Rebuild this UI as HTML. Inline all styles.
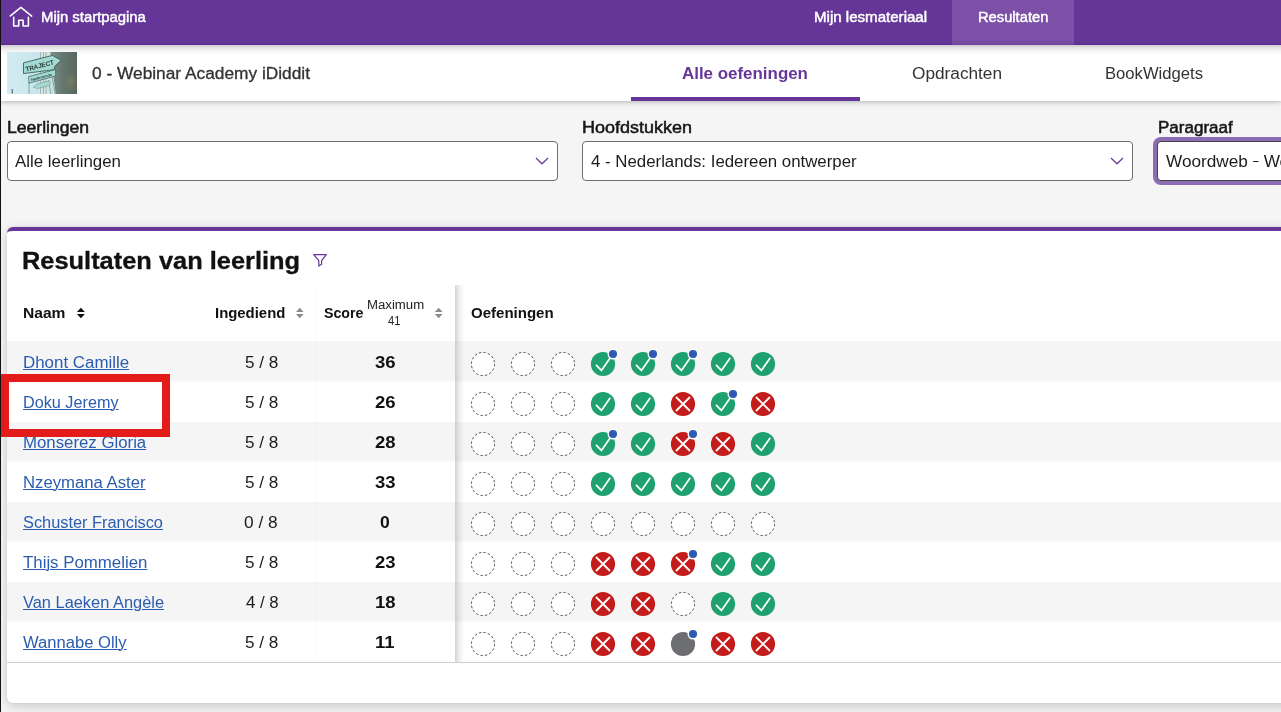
<!DOCTYPE html>
<html>
<head>
<meta charset="utf-8">
<style>
*{box-sizing:border-box;margin:0;padding:0}
html,body{width:1281px;height:712px;overflow:hidden;background:#f5f5f5;font-family:"Liberation Sans",sans-serif;color:#222}
body{position:relative}
.abs{position:absolute}
.tx{position:absolute;white-space:nowrap;transform-origin:0 0}
.edge{left:0;top:0;width:1px;height:712px;background:#111;z-index:50}
.topbar{left:0;top:0;width:1281px;height:45px;background:#653698}
.restab{left:952px;top:0;width:122px;height:45px;background:#7b50a6}
.sub{left:0;top:45px;width:1281px;height:56px;background:#fff;box-shadow:0 1px 5px rgba(0,0,0,.28)}
.thumb{left:7px;top:52px;width:70px;height:42px;overflow:hidden}
.tabline{left:631px;top:97px;width:229px;height:4px;background:#653698}
.sel{height:40px;top:141px;background:#fff;border:1px solid #6f6f6f;border-radius:4px}
.card{left:7px;top:227px;width:1290px;height:476px;background:#fff;border-top:4px solid #653698;border-radius:6px 0 0 6px;box-shadow:0 3px 12px rgba(0,0,0,.19),0 0 2px rgba(0,0,0,.08)}
.row{left:7px;width:1290px;height:40px}
.row.g{background:#f5f5f5}
svg{position:absolute;overflow:visible}
</style>
</head>
<body>
<div class="abs topbar"></div>
<div class="abs restab"></div>
<svg style="left:0;top:0" width="40" height="40" viewBox="0 0 40 40"><path d="M10.4 15.9 L20.9 7.4 L31.7 16.1 M13.7 17.3 V26 H18.7 V20.3 H23.1 V26 H28.4 V17.3" fill="none" stroke="#fff" stroke-width="1.6" stroke-linejoin="round" stroke-linecap="round"/></svg>

<div class="abs sub"></div>
<div class="abs" style="left:0;top:45px;width:1281px;height:10px;background:linear-gradient(180deg,rgba(0,0,0,.2),rgba(0,0,0,.11) 25%,rgba(0,0,0,.04) 60%,rgba(0,0,0,0))"></div>
<div class="abs" style="left:0;top:44px;width:1281px;height:1px;background:#5c2d90"></div>
<div class="abs" style="left:952px;top:44px;width:122px;height:1px;background:#7241a2"></div>
<div class="abs thumb"><svg width="70" height="42" viewBox="0 0 70 42" style="left:0;top:0">
<defs><linearGradient id="sky" x1="0" x2="1"><stop offset="0" stop-color="#d3ecf3"/><stop offset="1" stop-color="#b9dde6"/></linearGradient>
<linearGradient id="dk" x1="0" x2="1"><stop offset="0" stop-color="#7d8f86"/><stop offset=".45" stop-color="#64766d"/><stop offset="1" stop-color="#56655e"/></linearGradient>
<radialGradient id="bl" cx=".5" cy=".5" r=".5"><stop offset="0" stop-color="#8f8a55" stop-opacity=".5"/><stop offset="1" stop-color="#8f8a55" stop-opacity="0"/></radialGradient>
<filter id="bz" x="-5%" y="-5%" width="110%" height="110%"><feGaussianBlur stdDeviation=".45"/></filter></defs>
<g filter="url(#bz)">
<rect x="-2" y="-2" width="74" height="46" fill="url(#sky)"/>
<rect x="31" y="-2" width="13" height="46" fill="#cfe3e4"/>
<path d="M33.5 0 V42 M36.5 0 V42 M39 0 V42" stroke="#8fa5a0" stroke-width=".7"/>
<polygon points="43,-2 72,-2 72,44 49,44" fill="url(#dk)"/>
<ellipse cx="64" cy="30" rx="7" ry="10" fill="url(#bl)"/>
<path d="M22 30 V43 M44.5 22 L48.5 43 M41.5 28 L44 43" stroke="#7f9a92" stroke-width=".9" fill="none"/>
<polygon points="16.5,10.8 45.5,3.4 54,8.2 47.6,14.4 47.4,17.6 16.5,21.6" fill="#a3dad2" stroke="#3f5f5a" stroke-width=".9"/>
<polygon points="21.6,24.6 48.6,17.6 48.6,24 22,31.2" fill="#a3dad2" stroke="#4a6a65" stroke-width=".8"/>
<polygon points="26.3,35 30.5,31.8 43,28.8 43,33.2 30.5,36.6" fill="#a3dad2" stroke="#6a8a85" stroke-width=".5"/>
<text x="19.2" y="19.6" transform="rotate(-14.5 19.2 19.6)" font-family="Liberation Sans" font-size="6.6" font-weight="bold" fill="#2a3a38" textLength="29" lengthAdjust="spacingAndGlyphs">TRAJECT</text>
<text x="24.4" y="29.2" transform="rotate(-14.5 24.4 29.2)" font-family="Liberation Sans" font-size="3.8" font-weight="bold" fill="#2f4340" textLength="21.5" lengthAdjust="spacingAndGlyphs">Nederlands</text>
<rect x="4.7" y="37" width="1" height="4.5" fill="#3c4a50"/>
</g></svg></div>
<div class="abs tabline"></div>

<div class="abs sel" style="left:7px;width:551px"></div>
<div class="abs sel" style="left:582px;width:551px"></div>
<div class="abs" style="left:1153px;top:137px;width:160px;height:48px;background:#8e6bb5;border-radius:8px"></div>
<div class="abs sel" style="left:1157px;width:160px;border-color:#444"></div>
<svg style="left:535px;top:156.5px" width="14" height="8" viewBox="0 0 14 8"><path d="M1 1 L7 6.8 L13 1" fill="none" stroke="#6b3a9e" stroke-width="1.2"/></svg>
<svg style="left:1110px;top:156.5px" width="14" height="8" viewBox="0 0 14 8"><path d="M1 1 L7 6.8 L13 1" fill="none" stroke="#6b3a9e" stroke-width="1.2"/></svg>

<div class="abs card"></div>
<svg style="left:0;top:0" width="400" height="300" viewBox="0 0 400 300"><path d="M313.7 254.6 H326.3 L321.6 260.7 V264.2 L318.8 266 V260.7 Z" fill="none" stroke="#653698" stroke-width="1.2" stroke-linejoin="round"/></svg>

<div class="abs row g" style="top:341px;height:40px"></div>
<div class="abs" style="left:7px;top:381px;width:1290px;height:1px;background:#fafafa"></div>
<div class="abs row g" style="top:422px;height:39px"></div>
<div class="abs" style="left:7px;top:461px;width:1290px;height:1px;background:#fafafa"></div>
<div class="abs row g" style="top:502px;height:39px"></div>
<div class="abs" style="left:7px;top:541px;width:1290px;height:1px;background:#fafafa"></div>
<div class="abs row g" style="top:582px;height:39px"></div>
<div class="abs" style="left:7px;top:621px;width:1290px;height:1px;background:#fafafa"></div>
<svg style="left:0;top:0" width="1281" height="712" viewBox="0 0 1281 712"><circle cx="483" cy="364" r="11.6" fill="#fff" stroke="#555" stroke-width="1" stroke-dasharray="2.5 2.05"/><circle cx="523" cy="364" r="11.6" fill="#fff" stroke="#555" stroke-width="1" stroke-dasharray="2.5 2.05"/><circle cx="563" cy="364" r="11.6" fill="#fff" stroke="#555" stroke-width="1" stroke-dasharray="2.5 2.05"/><circle cx="603" cy="364" r="12.1" fill="#1fa16f"/><path d="M595.9 364.9 L601.4 370.4 L610.3 357.8" fill="none" stroke="#fff" stroke-width="1.7"/><circle cx="613" cy="354" r="5.5" fill="#fff"/><circle cx="613" cy="354" r="4.1" fill="#2d5bb1"/><circle cx="643" cy="364" r="12.1" fill="#1fa16f"/><path d="M635.9 364.9 L641.4 370.4 L650.3 357.8" fill="none" stroke="#fff" stroke-width="1.7"/><circle cx="653" cy="354" r="5.5" fill="#fff"/><circle cx="653" cy="354" r="4.1" fill="#2d5bb1"/><circle cx="683" cy="364" r="12.1" fill="#1fa16f"/><path d="M675.9 364.9 L681.4 370.4 L690.3 357.8" fill="none" stroke="#fff" stroke-width="1.7"/><circle cx="693" cy="354" r="5.5" fill="#fff"/><circle cx="693" cy="354" r="4.1" fill="#2d5bb1"/><circle cx="723" cy="364" r="12.1" fill="#1fa16f"/><path d="M715.9 364.9 L721.4 370.4 L730.3 357.8" fill="none" stroke="#fff" stroke-width="1.7"/><circle cx="763" cy="364" r="12.1" fill="#1fa16f"/><path d="M755.9 364.9 L761.4 370.4 L770.3 357.8" fill="none" stroke="#fff" stroke-width="1.7"/><circle cx="483" cy="404" r="11.6" fill="#fff" stroke="#555" stroke-width="1" stroke-dasharray="2.5 2.05"/><circle cx="523" cy="404" r="11.6" fill="#fff" stroke="#555" stroke-width="1" stroke-dasharray="2.5 2.05"/><circle cx="563" cy="404" r="11.6" fill="#fff" stroke="#555" stroke-width="1" stroke-dasharray="2.5 2.05"/><circle cx="603" cy="404" r="12.1" fill="#1fa16f"/><path d="M595.9 404.9 L601.4 410.4 L610.3 397.8" fill="none" stroke="#fff" stroke-width="1.7"/><circle cx="643" cy="404" r="12.1" fill="#1fa16f"/><path d="M635.9 404.9 L641.4 410.4 L650.3 397.8" fill="none" stroke="#fff" stroke-width="1.7"/><circle cx="683" cy="404" r="12.1" fill="#c41b1b"/><path d="M676 397 L690 411 M690 397 L676 411" fill="none" stroke="#fff" stroke-width="1.9"/><circle cx="723" cy="404" r="12.1" fill="#1fa16f"/><path d="M715.9 404.9 L721.4 410.4 L730.3 397.8" fill="none" stroke="#fff" stroke-width="1.7"/><circle cx="733" cy="394" r="5.5" fill="#fff"/><circle cx="733" cy="394" r="4.1" fill="#2d5bb1"/><circle cx="763" cy="404" r="12.1" fill="#c41b1b"/><path d="M756 397 L770 411 M770 397 L756 411" fill="none" stroke="#fff" stroke-width="1.9"/><circle cx="483" cy="444" r="11.6" fill="#fff" stroke="#555" stroke-width="1" stroke-dasharray="2.5 2.05"/><circle cx="523" cy="444" r="11.6" fill="#fff" stroke="#555" stroke-width="1" stroke-dasharray="2.5 2.05"/><circle cx="563" cy="444" r="11.6" fill="#fff" stroke="#555" stroke-width="1" stroke-dasharray="2.5 2.05"/><circle cx="603" cy="444" r="12.1" fill="#1fa16f"/><path d="M595.9 444.9 L601.4 450.4 L610.3 437.8" fill="none" stroke="#fff" stroke-width="1.7"/><circle cx="613" cy="434" r="5.5" fill="#fff"/><circle cx="613" cy="434" r="4.1" fill="#2d5bb1"/><circle cx="643" cy="444" r="12.1" fill="#1fa16f"/><path d="M635.9 444.9 L641.4 450.4 L650.3 437.8" fill="none" stroke="#fff" stroke-width="1.7"/><circle cx="683" cy="444" r="12.1" fill="#c41b1b"/><path d="M676 437 L690 451 M690 437 L676 451" fill="none" stroke="#fff" stroke-width="1.9"/><circle cx="693" cy="434" r="5.5" fill="#fff"/><circle cx="693" cy="434" r="4.1" fill="#2d5bb1"/><circle cx="723" cy="444" r="12.1" fill="#c41b1b"/><path d="M716 437 L730 451 M730 437 L716 451" fill="none" stroke="#fff" stroke-width="1.9"/><circle cx="763" cy="444" r="12.1" fill="#1fa16f"/><path d="M755.9 444.9 L761.4 450.4 L770.3 437.8" fill="none" stroke="#fff" stroke-width="1.7"/><circle cx="483" cy="484" r="11.6" fill="#fff" stroke="#555" stroke-width="1" stroke-dasharray="2.5 2.05"/><circle cx="523" cy="484" r="11.6" fill="#fff" stroke="#555" stroke-width="1" stroke-dasharray="2.5 2.05"/><circle cx="563" cy="484" r="11.6" fill="#fff" stroke="#555" stroke-width="1" stroke-dasharray="2.5 2.05"/><circle cx="603" cy="484" r="12.1" fill="#1fa16f"/><path d="M595.9 484.9 L601.4 490.4 L610.3 477.8" fill="none" stroke="#fff" stroke-width="1.7"/><circle cx="643" cy="484" r="12.1" fill="#1fa16f"/><path d="M635.9 484.9 L641.4 490.4 L650.3 477.8" fill="none" stroke="#fff" stroke-width="1.7"/><circle cx="683" cy="484" r="12.1" fill="#1fa16f"/><path d="M675.9 484.9 L681.4 490.4 L690.3 477.8" fill="none" stroke="#fff" stroke-width="1.7"/><circle cx="723" cy="484" r="12.1" fill="#1fa16f"/><path d="M715.9 484.9 L721.4 490.4 L730.3 477.8" fill="none" stroke="#fff" stroke-width="1.7"/><circle cx="763" cy="484" r="12.1" fill="#1fa16f"/><path d="M755.9 484.9 L761.4 490.4 L770.3 477.8" fill="none" stroke="#fff" stroke-width="1.7"/><circle cx="483" cy="524" r="11.6" fill="#fff" stroke="#555" stroke-width="1" stroke-dasharray="2.5 2.05"/><circle cx="523" cy="524" r="11.6" fill="#fff" stroke="#555" stroke-width="1" stroke-dasharray="2.5 2.05"/><circle cx="563" cy="524" r="11.6" fill="#fff" stroke="#555" stroke-width="1" stroke-dasharray="2.5 2.05"/><circle cx="603" cy="524" r="11.6" fill="#fff" stroke="#555" stroke-width="1" stroke-dasharray="2.5 2.05"/><circle cx="643" cy="524" r="11.6" fill="#fff" stroke="#555" stroke-width="1" stroke-dasharray="2.5 2.05"/><circle cx="683" cy="524" r="11.6" fill="#fff" stroke="#555" stroke-width="1" stroke-dasharray="2.5 2.05"/><circle cx="723" cy="524" r="11.6" fill="#fff" stroke="#555" stroke-width="1" stroke-dasharray="2.5 2.05"/><circle cx="763" cy="524" r="11.6" fill="#fff" stroke="#555" stroke-width="1" stroke-dasharray="2.5 2.05"/><circle cx="483" cy="564" r="11.6" fill="#fff" stroke="#555" stroke-width="1" stroke-dasharray="2.5 2.05"/><circle cx="523" cy="564" r="11.6" fill="#fff" stroke="#555" stroke-width="1" stroke-dasharray="2.5 2.05"/><circle cx="563" cy="564" r="11.6" fill="#fff" stroke="#555" stroke-width="1" stroke-dasharray="2.5 2.05"/><circle cx="603" cy="564" r="12.1" fill="#c41b1b"/><path d="M596 557 L610 571 M610 557 L596 571" fill="none" stroke="#fff" stroke-width="1.9"/><circle cx="643" cy="564" r="12.1" fill="#c41b1b"/><path d="M636 557 L650 571 M650 557 L636 571" fill="none" stroke="#fff" stroke-width="1.9"/><circle cx="683" cy="564" r="12.1" fill="#c41b1b"/><path d="M676 557 L690 571 M690 557 L676 571" fill="none" stroke="#fff" stroke-width="1.9"/><circle cx="693" cy="554" r="5.5" fill="#fff"/><circle cx="693" cy="554" r="4.1" fill="#2d5bb1"/><circle cx="723" cy="564" r="12.1" fill="#1fa16f"/><path d="M715.9 564.9 L721.4 570.4 L730.3 557.8" fill="none" stroke="#fff" stroke-width="1.7"/><circle cx="763" cy="564" r="12.1" fill="#1fa16f"/><path d="M755.9 564.9 L761.4 570.4 L770.3 557.8" fill="none" stroke="#fff" stroke-width="1.7"/><circle cx="483" cy="604" r="11.6" fill="#fff" stroke="#555" stroke-width="1" stroke-dasharray="2.5 2.05"/><circle cx="523" cy="604" r="11.6" fill="#fff" stroke="#555" stroke-width="1" stroke-dasharray="2.5 2.05"/><circle cx="563" cy="604" r="11.6" fill="#fff" stroke="#555" stroke-width="1" stroke-dasharray="2.5 2.05"/><circle cx="603" cy="604" r="12.1" fill="#c41b1b"/><path d="M596 597 L610 611 M610 597 L596 611" fill="none" stroke="#fff" stroke-width="1.9"/><circle cx="643" cy="604" r="12.1" fill="#c41b1b"/><path d="M636 597 L650 611 M650 597 L636 611" fill="none" stroke="#fff" stroke-width="1.9"/><circle cx="683" cy="604" r="11.6" fill="#fff" stroke="#555" stroke-width="1" stroke-dasharray="2.5 2.05"/><circle cx="723" cy="604" r="12.1" fill="#1fa16f"/><path d="M715.9 604.9 L721.4 610.4 L730.3 597.8" fill="none" stroke="#fff" stroke-width="1.7"/><circle cx="763" cy="604" r="12.1" fill="#1fa16f"/><path d="M755.9 604.9 L761.4 610.4 L770.3 597.8" fill="none" stroke="#fff" stroke-width="1.7"/><circle cx="483" cy="644" r="11.6" fill="#fff" stroke="#555" stroke-width="1" stroke-dasharray="2.5 2.05"/><circle cx="523" cy="644" r="11.6" fill="#fff" stroke="#555" stroke-width="1" stroke-dasharray="2.5 2.05"/><circle cx="563" cy="644" r="11.6" fill="#fff" stroke="#555" stroke-width="1" stroke-dasharray="2.5 2.05"/><circle cx="603" cy="644" r="12.1" fill="#c41b1b"/><path d="M596 637 L610 651 M610 637 L596 651" fill="none" stroke="#fff" stroke-width="1.9"/><circle cx="643" cy="644" r="12.1" fill="#c41b1b"/><path d="M636 637 L650 651 M650 637 L636 651" fill="none" stroke="#fff" stroke-width="1.9"/><circle cx="683" cy="644" r="12.1" fill="#6d6e72"/><circle cx="693" cy="634" r="5.5" fill="#fff"/><circle cx="693" cy="634" r="4.1" fill="#2d5bb1"/><circle cx="723" cy="644" r="12.1" fill="#c41b1b"/><path d="M716 637 L730 651 M730 637 L716 651" fill="none" stroke="#fff" stroke-width="1.9"/><circle cx="763" cy="644" r="12.1" fill="#c41b1b"/><path d="M756 637 L770 651 M770 637 L756 651" fill="none" stroke="#fff" stroke-width="1.9"/></svg>
<!-- bottom border of table -->
<div class="abs" style="left:7px;top:662px;width:1290px;height:1px;background:#cfcfd3"></div>
<!-- sticky column shadows -->
<div class="abs" style="left:455px;top:285px;width:10px;height:377px;background:linear-gradient(90deg,rgba(0,0,0,.17),rgba(0,0,0,.07) 40%,rgba(0,0,0,.02) 75%,rgba(0,0,0,0))"></div>
<div class="abs" style="left:316px;top:285px;width:1px;height:377px;background:rgba(0,0,0,.012)"></div>
<!-- sort icons -->
<svg style="left:0;top:0" width="1281" height="712" viewBox="0 0 1281 712">
<path d="M76.9 311.9 L80.9 307.7 L84.9 311.9 Z M76.9 314.1 L80.9 318.3 L84.9 314.1 Z" fill="#111"/>
<path d="M296 311.9 L299.8 307.7 L303.6 311.9 Z M296 314.1 L299.8 318.3 L303.6 314.1 Z" fill="#8a8a8a"/>
<path d="M434.8 311.9 L438.7 307.7 L442.6 311.9 Z M434.8 314.1 L438.7 318.3 L442.6 314.1 Z" fill="#8a8a8a"/>
</svg>
<div class="tx" style="left:40.94px;top:8.20px;font-size:14px;line-height:18px;font-weight:normal;color:#fff;transform:scaleX(1.0612);-webkit-text-stroke:.45px #fff">Mijn startpagina</div>
<div class="tx" style="left:813.62px;top:8.20px;font-size:14px;line-height:18px;font-weight:normal;color:#fff;transform:scaleX(1.0767);-webkit-text-stroke:.45px #fff">Mijn lesmateriaal</div>
<div class="tx" style="left:977.85px;top:8.20px;font-size:14px;line-height:18px;font-weight:normal;color:#fff;transform:scaleX(1.0508);-webkit-text-stroke:.45px #fff">Resultaten</div>
<div class="tx" style="left:92.32px;top:64.00px;font-size:16px;line-height:20px;font-weight:normal;color:#333;transform:scaleX(1.0816);-webkit-text-stroke:.3px #333">0 - Webinar Academy iDiddit</div>
<div class="tx" style="left:682.04px;top:64.00px;font-size:16px;line-height:20px;font-weight:bold;color:#653698;transform:scaleX(1.0573);">Alle oefeningen</div>
<div class="tx" style="left:911.52px;top:64.00px;font-size:16px;line-height:20px;font-weight:normal;color:#333;transform:scaleX(1.0768);">Opdrachten</div>
<div class="tx" style="left:1104.76px;top:64.00px;font-size:16px;line-height:20px;font-weight:normal;color:#333;transform:scaleX(1.0398);">BookWidgets</div>
<div class="tx" style="left:6.65px;top:118.00px;font-size:16px;line-height:20px;font-weight:normal;color:#161616;transform:scaleX(1.0993);-webkit-text-stroke:.5px #161616">Leerlingen</div>
<div class="tx" style="left:582.13px;top:118.00px;font-size:16px;line-height:20px;font-weight:normal;color:#161616;transform:scaleX(1.1245);-webkit-text-stroke:.5px #161616">Hoofdstukken</div>
<div class="tx" style="left:1157.54px;top:118.00px;font-size:16px;line-height:20px;font-weight:normal;color:#161616;transform:scaleX(1.0638);-webkit-text-stroke:.5px #161616">Paragraaf</div>
<div class="tx" style="left:15.00px;top:152.00px;font-size:16px;line-height:20px;font-weight:normal;color:#1c1c1c;transform:scaleX(1.0545);">Alle leerlingen</div>
<div class="tx" style="left:590.75px;top:152.00px;font-size:16px;line-height:20px;font-weight:normal;color:#1c1c1c;transform:scaleX(1.0516);">4 - Nederlands: Iedereen ontwerper</div>
<div class="tx" style="left:1165.80px;top:152.00px;font-size:16px;line-height:20px;font-weight:normal;color:#1c1c1c;transform:scaleX(1.0750);">Woordweb <span style="display:inline-block;width:5.8px;height:1.2px;background:#1c1c1c;vertical-align:4.6px"></span> We</div>
<div class="tx" style="left:22.44px;top:247.00px;font-size:23.5px;line-height:29px;font-weight:bold;color:#111;transform:scaleX(1.0807);-webkit-text-stroke:.3px #111">Resultaten van leerling</div>
<div class="tx" style="left:22.59px;top:304.00px;font-size:14px;line-height:18px;font-weight:bold;color:#111;transform:scaleX(1.1139);">Naam</div>
<div class="tx" style="left:214.74px;top:304.00px;font-size:14px;line-height:18px;font-weight:bold;color:#111;transform:scaleX(1.0641);">Ingediend</div>
<div class="tx" style="left:323.79px;top:304.00px;font-size:14px;line-height:18px;font-weight:bold;color:#111;transform:scaleX(1.0135);">Score</div>
<div class="tx" style="left:366.70px;top:298.00px;font-size:12px;line-height:15px;font-weight:normal;color:#222;transform:scaleX(1.1000);">Maximum</div>
<div class="tx" style="left:388.20px;top:314.00px;font-size:12px;line-height:15px;font-weight:normal;color:#222;transform:scaleX(0.9308);">41</div>
<div class="tx" style="left:470.93px;top:304.00px;font-size:14px;line-height:18px;font-weight:bold;color:#111;transform:scaleX(1.0733);">Oefeningen</div>
<div class="tx" style="left:23.00px;top:353.00px;font-size:16px;line-height:20px;font-weight:normal;color:#2a5db0;transform:scaleX(1.0560);text-decoration:underline;text-underline-offset:1px;text-decoration-thickness:1px">Dhont Camille</div>
<div class="tx" style="left:244.83px;top:353.00px;font-size:16px;line-height:20px;font-weight:normal;color:#1c1c1c;transform:scaleX(1.0700);">5 / 8</div>
<div class="tx" style="left:375.34px;top:353.00px;font-size:16px;line-height:20px;font-weight:bold;color:#111;transform:scaleX(1.1562);">36</div>
<div class="tx" style="left:23.00px;top:393.00px;font-size:16px;line-height:20px;font-weight:normal;color:#2a5db0;transform:scaleX(1.0138);text-decoration:underline;text-underline-offset:1px;text-decoration-thickness:1px">Doku Jeremy</div>
<div class="tx" style="left:244.83px;top:393.00px;font-size:16px;line-height:20px;font-weight:normal;color:#1c1c1c;transform:scaleX(1.0700);">5 / 8</div>
<div class="tx" style="left:375.34px;top:393.00px;font-size:16px;line-height:20px;font-weight:bold;color:#111;transform:scaleX(1.1562);">26</div>
<div class="tx" style="left:23.00px;top:433.00px;font-size:16px;line-height:20px;font-weight:normal;color:#2a5db0;transform:scaleX(1.0496);text-decoration:underline;text-underline-offset:1px;text-decoration-thickness:1px">Monserez Gloria</div>
<div class="tx" style="left:244.83px;top:433.00px;font-size:16px;line-height:20px;font-weight:normal;color:#1c1c1c;transform:scaleX(1.0700);">5 / 8</div>
<div class="tx" style="left:375.34px;top:433.00px;font-size:16px;line-height:20px;font-weight:bold;color:#111;transform:scaleX(1.1562);">28</div>
<div class="tx" style="left:23.00px;top:473.00px;font-size:16px;line-height:20px;font-weight:normal;color:#2a5db0;transform:scaleX(1.0444);text-decoration:underline;text-underline-offset:1px;text-decoration-thickness:1px">Nzeymana Aster</div>
<div class="tx" style="left:244.83px;top:473.00px;font-size:16px;line-height:20px;font-weight:normal;color:#1c1c1c;transform:scaleX(1.0700);">5 / 8</div>
<div class="tx" style="left:375.34px;top:473.00px;font-size:16px;line-height:20px;font-weight:bold;color:#111;transform:scaleX(1.1562);">33</div>
<div class="tx" style="left:23.00px;top:513.00px;font-size:16px;line-height:20px;font-weight:normal;color:#2a5db0;transform:scaleX(1.0221);text-decoration:underline;text-underline-offset:1px;text-decoration-thickness:1px">Schuster Francisco</div>
<div class="tx" style="left:244.42px;top:513.00px;font-size:16px;line-height:20px;font-weight:normal;color:#1c1c1c;transform:scaleX(1.0833);">0 / 8</div>
<div class="tx" style="left:380.11px;top:513.00px;font-size:16px;line-height:20px;font-weight:bold;color:#111;transform:scaleX(1.0940);">0</div>
<div class="tx" style="left:23.00px;top:553.00px;font-size:16px;line-height:20px;font-weight:normal;color:#2a5db0;transform:scaleX(1.0521);text-decoration:underline;text-underline-offset:1px;text-decoration-thickness:1px">Thijs Pommelien</div>
<div class="tx" style="left:244.83px;top:553.00px;font-size:16px;line-height:20px;font-weight:normal;color:#1c1c1c;transform:scaleX(1.0700);">5 / 8</div>
<div class="tx" style="left:375.34px;top:553.00px;font-size:16px;line-height:20px;font-weight:bold;color:#111;transform:scaleX(1.1562);">23</div>
<div class="tx" style="left:23.00px;top:593.00px;font-size:16px;line-height:20px;font-weight:normal;color:#2a5db0;transform:scaleX(1.0248);text-decoration:underline;text-underline-offset:1px;text-decoration-thickness:1px">Van Laeken Angèle</div>
<div class="tx" style="left:245.50px;top:593.00px;font-size:16px;line-height:20px;font-weight:normal;color:#1c1c1c;transform:scaleX(1.0484);">4 / 8</div>
<div class="tx" style="left:375.34px;top:593.00px;font-size:16px;line-height:20px;font-weight:bold;color:#111;transform:scaleX(1.1562);">18</div>
<div class="tx" style="left:23.00px;top:633.00px;font-size:16px;line-height:20px;font-weight:normal;color:#2a5db0;transform:scaleX(1.0370);text-decoration:underline;text-underline-offset:1px;text-decoration-thickness:1px">Wannabe Olly</div>
<div class="tx" style="left:244.83px;top:633.00px;font-size:16px;line-height:20px;font-weight:normal;color:#1c1c1c;transform:scaleX(1.0700);">5 / 8</div>
<div class="tx" style="left:375.34px;top:633.00px;font-size:16px;line-height:20px;font-weight:bold;color:#111;transform:scaleX(1.1562);">11</div>
<!-- red annotation -->
<div class="abs" style="left:1px;top:374px;width:169px;height:63px;border:8px solid #e31b1b"></div>
<div class="edge abs"></div>
</body>
</html>
